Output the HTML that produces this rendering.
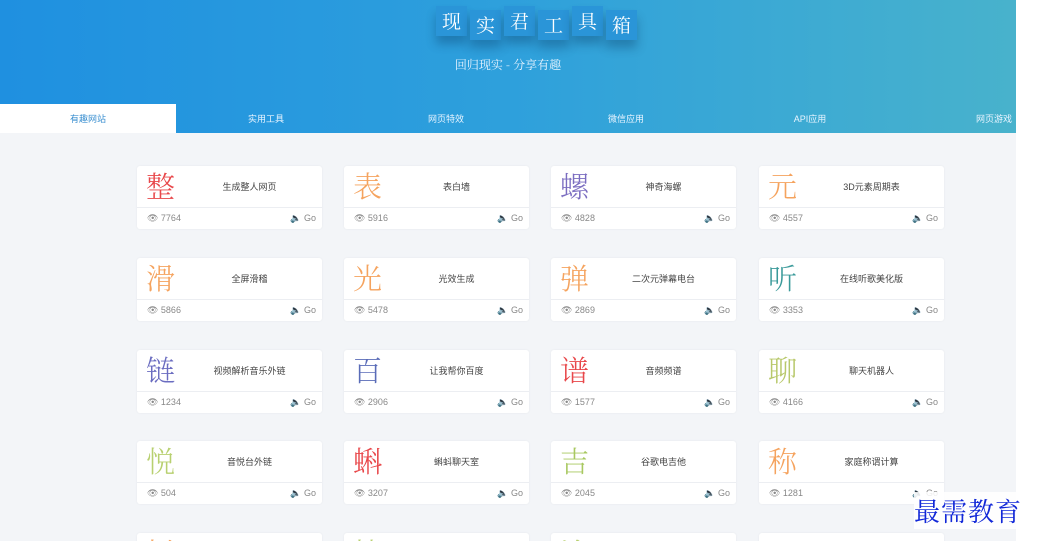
<!DOCTYPE html>
<html><head><meta charset="utf-8"><style>
*{margin:0;padding:0;box-sizing:border-box}
body{width:1037px;height:541px;overflow:hidden;background:#fff;font-family:"Liberation Sans","Noto Sans CJK SC",sans-serif;position:relative}
#main{position:absolute;left:0;top:0;width:1016px;height:541px;background:#f3f5f8;overflow:hidden}
#hd{position:absolute;left:0;top:0;width:1016px;height:133px;background:linear-gradient(90deg,#1f90e0 0%,#2ea0dc 50%,#48b2cc 100%)}
#title{position:absolute;left:436px;top:6px;display:flex;gap:3px}
#title span{display:block;width:31px;height:30px;background:#2a95d8;color:#fff;font-family:"Noto Serif CJK SC",serif;font-size:19px;line-height:30px;text-align:center;box-shadow:0 8px 10px rgba(0,40,80,.3)}
#title span:nth-child(2n){margin-top:4px}
#sub{position:absolute;left:0;width:1016px;top:56px;text-align:center;color:#e8f4ff;font-family:"Noto Serif CJK SC",serif;font-size:12px}
.tab{position:absolute;top:104px;height:29px;width:176px;line-height:30px;text-align:center;color:#e8f4ff;font-size:9px}
.tab.on{background:#fff;color:#3a8fd0}
.card{position:absolute;width:185px;height:63px;background:#fff;border-radius:3px;box-shadow:0 0 2px rgba(0,0,0,.06)}
.card .t{height:42px;border-bottom:1px solid #eceef2;position:relative}
.card .c{position:absolute;left:9px;top:3px;font-family:"Noto Serif CJK SC",serif;font-weight:300;font-size:29px;line-height:34px}
.card .n{position:absolute;left:40px;right:0;top:14px;text-align:center;font-size:9px;color:#444}
.card .b{height:21px;position:relative;font-size:9px;color:#888;line-height:21px}
.card .v{position:absolute;left:10px}
.card .g{position:absolute;right:6px}
#wm{position:absolute;left:914px;top:492px;font-family:"Noto Serif CJK SC",serif;font-size:26px;color:#1228d8;letter-spacing:1px;background:rgba(255,255,255,.85)}
</style></head><body>
<div id="main">
<div id="hd">
<div id="title"><span>现</span><span>实</span><span>君</span><span>工</span><span>具</span><span>箱</span></div>
<div id="sub">回归现实 - 分享有趣</div>
<div class="tab on" style="left:0">有趣网站</div>
<div class="tab" style="left:178px">实用工具</div>
<div class="tab" style="left:358px">网页特效</div>
<div class="tab" style="left:538px">微信应用</div>
<div class="tab" style="left:722px">API应用</div>
<div class="tab" style="left:906px">网页游戏</div>
</div>
<div id="cards"></div>
</div>
<div id="wm">最需教育</div>
<script>
var d=[["整","生成整人网页","7764","#e8474a"],["表","表白墙","5916","#f5a35e"],["螺","神奇海螺","4828","#7a6cc0"],["元","3D元素周期表","4557","#f5a35e"],
["滑","全屏滑稽","5866","#f5a35e"],["光","光效生成","5478","#f5a35e"],["弹","二次元弹幕电台","2869","#f5a35e"],["听","在线听歌美化版","3353","#3a9a9a"],
["链","视频解析音乐外链","1234","#6a6cc0"],["百","让我帮你百度","2906","#5a6cb8"],["谱","音频频谱","1577","#e8474a"],["聊","聊天机器人","4166","#b8c86a"],
["悦","音悦台外链","504","#b8d070"],["蝌","蝌蚪聊天室","3207","#e8474a"],["吉","谷歌电吉他","2045","#a8c860"],["称","家庭称谓计算","1281","#f5a35e"],
["树","","","#f5a35e"],["情","","","#b8d070"],["涂","","","#b8d070"],["三","","","#e8474a"]];
var xs=[137,344,551,759],ys=[166,258,350,441,533],h="";
d.forEach(function(e,i){var x=xs[i%4],y=ys[Math.floor(i/4)];
h+='<div class="card" style="left:'+x+'px;top:'+y+'px"><div class="t"><div class="c" style="color:'+e[3]+'">'+e[0]+'</div><div class="n">'+e[1]+'</div></div><div class="b"><span class="v">&#128065; '+e[2]+'</span><span class="g">&#128264; Go</span></div></div>';});
document.getElementById("cards").innerHTML=h;
</script>
</body></html>
